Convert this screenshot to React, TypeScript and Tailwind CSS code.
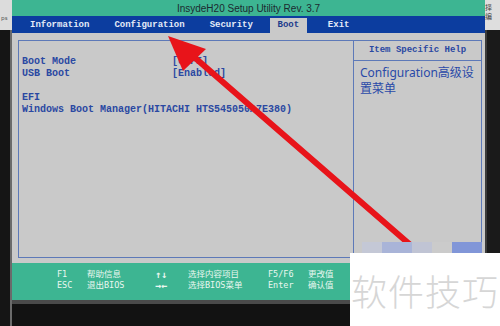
const mono = { fontFamily: '"Liberation Mono", "Noto Sans CJK SC", monospace' };

const tabs = [
  { label: 'Information', cls: '' },
  { label: 'Configuration', cls: 'ml-[25px]' },
  { label: 'Security', cls: 'ml-[25px]' },
];

const footerRows = [
  ['F1', '帮助信息', '↑↓', '选择内容项目', 'F5/F6', '更改值'],
  ['ESC', '退出BIOS', '→←', '选择BIOS菜单', 'Enter', '确认值'],
];

function Arrow() {
  return (
    <svg className="absolute inset-0 pointer-events-none" width="500" height="326" viewBox="0 0 500 326">
      <line x1="430" y1="262" x2="186" y2="50" stroke="#e8141a" strokeWidth="6" strokeLinecap="round" />
      <polygon points="168,36 206,49 183,71" fill="#e8141a" />
    </svg>
  );
}

export default function App() {
  return (
    <div className="relative w-[500px] h-[326px] overflow-hidden bg-[#161616] flex">
      {/* left edge of the photo */}
      <div className="w-[12px] flex flex-col">
        <div className="h-[30px] bg-[#dcdcdc] text-[6px] leading-[8px] text-[#555] pt-[14px] pl-[1px]">ps</div>
        <div className="flex-1 bg-[#151515] border-r-2 border-[#6b6b6b]" />
      </div>

      {/* BIOS screen */}
      <div className="w-[473px] flex flex-col">
        <div
          className="h-[16px] bg-[#3db592] flex items-center justify-center text-[10px] text-[#1c2a30]"
          style={{ fontFamily: '"Liberation Sans", Arial, sans-serif' }}
        >
          InsydeH20 Setup Utility Rev. 3.7
        </div>

        <div className="h-[17px] bg-[#0c3d9f] flex items-end pl-[18px] text-[9px] font-bold text-[#e4ebf8]" style={mono}>
          {tabs.map((t) => (
            <div key={t.label} className={`h-[15px] flex items-center ${t.cls}`}>{t.label}</div>
          ))}
          <div className="ml-[17px] w-[37px] h-[15px] bg-[#c9c9c9] text-[#1d3b8c] flex items-center justify-center">Boot</div>
          <div className="ml-[21px] h-[15px] flex items-center">Exit</div>
        </div>

        <div className="h-[230px] bg-[#c9c9c9] pt-[7px] pl-[6px] pr-[3px] pb-[5px]">
          <div className="h-full border border-[#5d79b8] flex text-[#2a48a2]" style={mono}>
            <div className="w-[335px] border-r border-[#5d79b8] pl-[3px] pt-[15px] text-[10px] leading-[12px] font-bold">
              <div className="flex"><span className="w-[150px]">Boot Mode</span><span>[UEFI]</span></div>
              <div className="flex"><span className="w-[150px]">USB Boot</span><span>[Enabled]</span></div>
              <div className="h-[12px]" />
              <div>EFI</div>
              <div className="whitespace-nowrap">Windows Boot Manager(HITACHI HTS545050A7E380)</div>
            </div>
            <div className="flex-1 flex flex-col">
              <div className="h-[20px] border-b border-[#5d79b8] flex items-center justify-center text-[9px] font-bold">Item Specific Help</div>
              <div
                className="pl-[6px] pt-[4px] pr-[4px] text-[12px] leading-[16px] text-[#2a4aa8]"
                style={{ fontFamily: '"Noto Sans", "Noto Sans CJK SC", sans-serif' }}
              >
                Configuration高级设置菜单
              </div>
            </div>
          </div>
        </div>

        <div
          className="h-[37px] bg-[#3db592] pt-[6px] pl-[45px] text-[8.5px] leading-[11px] text-[#eaf7f0]"
          style={{ fontFamily: '"DejaVu Sans Mono", "Noto Sans CJK SC", monospace' }}
        >
          {footerRows.map((r) => (
            <div key={r[0]} className="grid grid-cols-[30px_68px_33px_80px_40px_60px] whitespace-nowrap items-center">
              {r.map((c, i) => (
                <span key={c} className={i === 2 ? 'text-[10px] font-bold' : ''}>{c}</span>
              ))}
            </div>
          ))}
        </div>
        <div className="h-[4px] bg-[#4a4a4a]" />
        <div className="flex-1 bg-[#121212]" />
      </div>

      {/* right edge of the photo */}
      <div className="flex-1 flex flex-col">
        <div className="h-[30px] bg-[#dedede] text-[7px] leading-[9px] text-[#444] pt-[3px]" style={{ fontFamily: '"Noto Sans CJK SC", sans-serif' }}>择<br />编</div>
        <div className="flex-1 bg-[#1a1a1a] border-l-2 border-[#3a3a3a]" />
      </div>

      <Arrow />

      {/* compression blocks near the watermark */}
      <div className="absolute left-[362px] top-[242px] w-[120px] h-[11px] flex">
        <div className="w-[20px] bg-[#c4c8d6]" />
        <div className="w-[30px] bg-[#a9b4d8]" />
        <div className="w-[20px] bg-[#c0c4d4]" />
        <div className="w-[20px] bg-[#cbcbcb]" />
        <div className="w-[30px] bg-[#8196d8]" />
      </div>

      {/* watermark */}
      <div
        className="absolute left-[350px] top-[253px] w-[150px] h-[73px] bg-white flex items-center justify-center text-[36px] font-light text-[#d6d6d6] tracking-[1px]"
        style={{ fontFamily: '"Noto Sans CJK SC", sans-serif' }}
      >
        软件技巧
      </div>
    </div>
  );
}
